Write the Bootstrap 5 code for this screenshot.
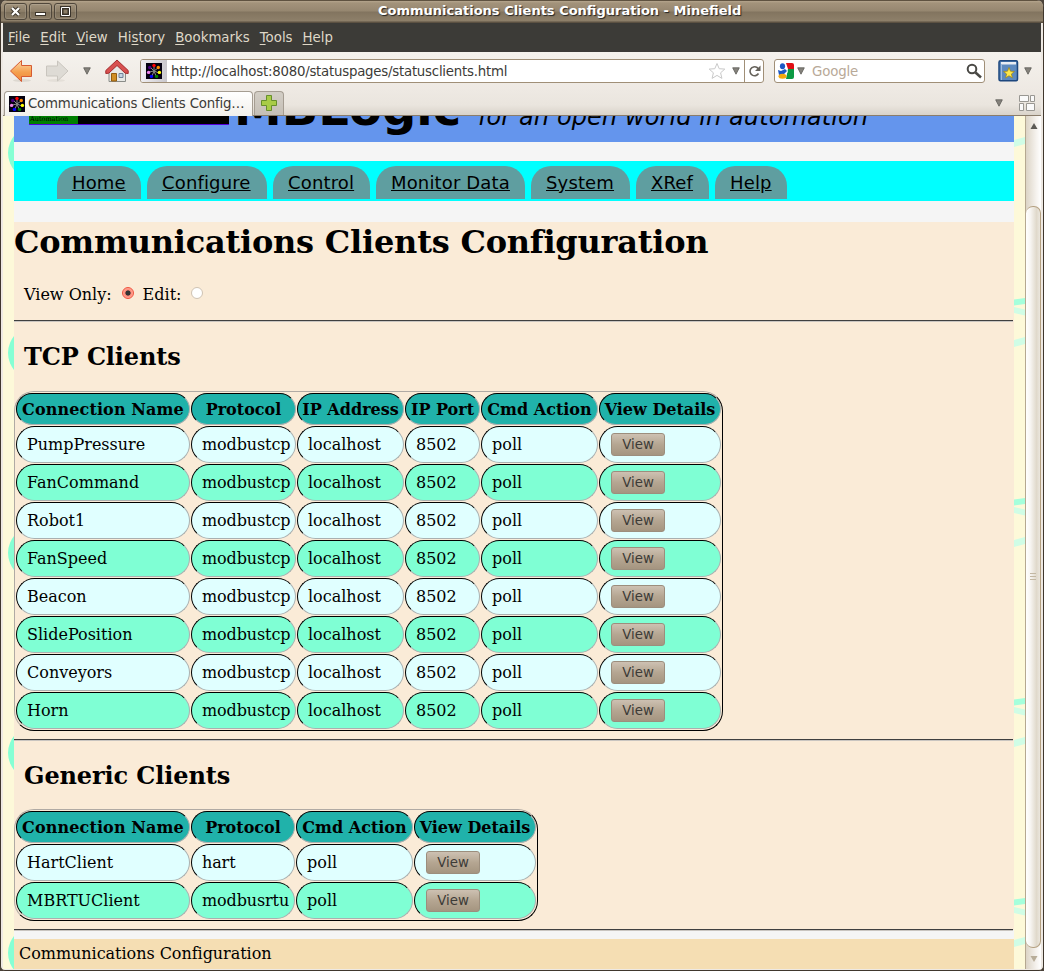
<!DOCTYPE html>
<html lang="en">
<head>
<meta charset="utf-8">
<title>Communications Clients Configuration</title>
<link href="https://cdn.jsdelivr.net/npm/bootstrap@5.3.0/dist/css/bootstrap.min.css" rel="stylesheet">
<style>
body{width:1044px;height:971px;overflow:hidden;background:#4b433a;font-family:"DejaVu Sans",sans-serif;color:#3c3b37;line-height:normal}
svg{display:block;flex:none}
.frame{width:1044px;height:971px;border-radius:7px 7px 5px 5px;background:#eee9e3;border:1px solid #40372d;border-top:0}
.titlebar{height:23px;padding-left:3px;background:linear-gradient(#5f5240 0,#5f5240 1px,#b5a58d 1px,#a3937b 3px,#968770 11px,#82745f 12px,#8e806a 21px,#5c5142 22px);border-radius:6px 6px 0 0}
.wbtn{width:23px;height:17px;margin-top:3px;margin-right:2px;border:1px solid #50473b;border-radius:3px;background:linear-gradient(#a3947d,#8b7d67 50%,#7b6e5a 51%,#8c7e68);box-shadow:inset 0 0 0 1px rgba(255,255,255,.12)}
.wtitle{font-size:13px;font-weight:bold;color:#fff;text-shadow:1px 1px 1px #222;line-height:21px;width:363px;margin-left:299px;white-space:nowrap}
.menus{height:29px;margin:0 2px;padding-left:5px;background:#3c3b37;color:#dfd8c8;font-size:13.33px;line-height:29px;gap:10px}
.menus u{text-underline-offset:2px}
.tools{height:38px;padding:0 0 0 7px;background:linear-gradient(#f5f2ed,#eee9e3);margin:0 2px}
.field{height:24px;border:1px solid #a08f77;border-radius:3px;background:#fff;font-size:13.33px;line-height:22px}
.favcell{width:26px;height:22px;background:linear-gradient(90deg,#f0eff2,#c9c7cc);border-radius:2px 0 0 2px}
.urltext{letter-spacing:-.235px;padding-top:2px;white-space:nowrap}
.tabstrip{height:26px;margin:0 2px;padding:1px 0 0 1px;background:linear-gradient(#eee9e3,#eae5de 60%,#d9d3ca);border-bottom:1px solid #8b7d6b}
.tabx{width:249px;height:25px;border:1px solid #a59d92;border-bottom:0;border-radius:4px 4px 0 0;background:linear-gradient(#fff,#f3f0eb);font-size:13.33px;letter-spacing:-.19px;line-height:22px;padding-left:4px;white-space:nowrap}
.tabnew{width:30px;height:24px;margin-left:1px;border:1px solid #a59d92;border-bottom:0;border-radius:4px 4px 0 0;background:linear-gradient(#d3cec6,#c5bfb6)}
.stage{height:853px;margin:0 2px 0 2px;background:#fdf9d9;overflow:hidden}
.pagecol{width:1000px;height:853px;background:#f5f5f5;color:#000;font-family:"DejaVu Serif",serif;font-size:16px;overflow:hidden}
.banner{height:80px;margin-top:-54px;background:#6495ed;padding:0 0 0 15px;font-family:"DejaVu Sans",sans-serif;white-space:nowrap}
.logo{width:200px;height:63px;margin-bottom:17px;background:#000;border-bottom:1px solid #50d}
.logo span{display:flex;align-items:flex-end;width:49px;height:62px;background:#008000;font:6.5px/8px "DejaVu Serif",serif;padding:0 0 1px 1px;overflow:hidden}
.brand{font-size:48px;font-weight:bold;line-height:56px;margin:0 0 6px 5px;width:244px}
.motto{font-size:24px;font-style:italic;line-height:28px;margin-bottom:11px;letter-spacing:.1px}
.navrow{height:40px;margin-top:19px;padding:5px 0 0 43px;background:#0ff;gap:6px;font-family:"DejaVu Sans",sans-serif;font-size:18px}
.navrow a{height:33px;border-radius:20px 20px 0 0;background:#5f9ea0;color:#000;padding-left:15px;letter-spacing:.15px;line-height:33px;white-space:nowrap}
.mainbox{height:708px;margin-top:21px;background:#faebd7}
.mainbox h1{font-size:32px;font-weight:bold;line-height:38px;height:63px;margin:0;padding-top:1px;letter-spacing:-.22px}
.mainbox h2{font-size:24px;font-weight:bold;line-height:28px;margin:0;padding-left:10px;letter-spacing:-.12px}
.rule{height:2px;background:linear-gradient(#3f3f3f 50%,#c9c5c0 50%);margin:0;border:0;opacity:1;width:999px}
.views{height:35px;padding-left:10px}
.radio-dot{width:12px;height:12px;border-radius:50%;background:#fff;border:1px solid #cfc3b3}
.radio-on{border-color:#f0523c;background:radial-gradient(circle,#333 0 2.2px,#ff8a78 3px,#ffb5a8 6px)}
.clients{table-layout:fixed;border-collapse:separate;border-spacing:1px;border:1px solid;border-color:#b0aaa4 #000 #000 #b0aaa4;border-radius:20px;white-space:nowrap}
.clients th,.clients td{border:1px solid;border-color:#000 #aab0b0 #aab0b0 #000;border-radius:20px}
.clients th{height:32px;background:#20b2aa;text-align:center;padding:0}
.clients th:first-child{letter-spacing:.12px}
.clients td{height:37px;background:#e0ffff;padding:0 0 0 10px}
.clients td:nth-child(2){letter-spacing:-.12px}
.clients tr:nth-child(even) td{background:#7fffd4}
.vbtn{display:flex;justify-content:center;width:54px;height:23px;margin-left:1px;border:1px solid #9c8e7d;border-radius:3px;background:linear-gradient(#cdc1b2,#b5a692 50%,#a59580);font:13.33px/21px "DejaVu Sans",sans-serif;color:#3c3b37;padding:0}
.foot{height:40px;margin-top:9px;background:#f5deb3;padding-left:5px;line-height:29px;letter-spacing:-.04px}
.scroll{width:16px;height:853px;border-left:1px solid #b5a890;background:linear-gradient(90deg,#dcd4c6,#f6f3ef 70%,#fff)}
.thumb{height:742px;margin:0;border:1px solid #b5a182;border-left:0;border-radius:7px;background:linear-gradient(90deg,#fff,#f8f6f3 30%,#e0d9cb 75%,#ebe6dd)}
.arrowbox{height:90px}
</style>
</head>
<body>
<svg width="0" height="0" class="d-none"><defs>
<symbol id="fav" viewBox="0 0 16 16"><rect width="16" height="16" fill="#040010"/><path d="M8 8V3M8 8l4-3M8 8l5 2M8 8l2 5M8 8l-2 5M8 8L3 9M8 8L4 4" stroke="#888" stroke-width="1"/><circle cx="8" cy="2.5" r="1.7" fill="#f00"/><circle cx="12.3" cy="4.5" r="1.7" fill="#ff8c00"/><circle cx="13.4" cy="9.4" r="1.7" fill="#ff0"/><circle cx="10.6" cy="13.4" r="1.7" fill="#008000"/><circle cx="5.4" cy="13.4" r="1.7" fill="#00f"/><circle cx="2.6" cy="9.4" r="1.7" fill="#ee82ee"/><circle cx="3.7" cy="4.5" r="1.7" fill="#4b0082"/></symbol>
<symbol id="down" viewBox="0 0 8 8"><path d="M.7.8h6.6L4 7.2z" fill="#85827c" stroke="#5c5a55" stroke-width=".8"/></symbol>
</defs></svg>
<div class="frame">
  <header class="titlebar d-flex">
    <div class="wbtn"><svg width="21" height="15"><path d="M7 4l7 7M14 4l-7 7" stroke="#3b342b" stroke-width="4"/><path d="M7 4l7 7M14 4l-7 7" stroke="#fff" stroke-width="2.2"/></svg></div>
    <div class="wbtn"><svg width="21" height="15"><path d="M5 8h11v4H5z" fill="#3b342b"/><path d="M6 9h9v2H6z" fill="#fff"/></svg></div>
    <div class="wbtn"><svg width="21" height="15"><path d="M5 2h11v11H5z" fill="#3b342b"/><path d="M6.500 3.500h8v8h-8z" fill="none" stroke="#fff"/><path d="M8.500 5.500h4v4h-4z" fill="#8b7d67"/></svg></div>
    <div class="wtitle">Communications Clients Configuration - Minefield</div>
  </header>
  <nav class="menus d-flex"><span><u>F</u>ile</span><span><u>E</u>dit</span><span><u>V</u>iew</span><span>Hi<u>s</u>tory</span><span><u>B</u>ookmarks</span><span><u>T</u>ools</span><span><u>H</u>elp</span></nav>
  <div class="tools d-flex align-items-center">
    <svg width="22" height="24" viewBox="0 0 22 24"><defs><linearGradient id="og" x2="0" y2="1"><stop stop-color="#fcd9a8"/><stop offset=".55" stop-color="#f5a04f"/><stop offset="1" stop-color="#f08636"/></linearGradient></defs><ellipse cx="12" cy="21.5" rx="9" ry="1.5" fill="#ddd8d0"/><path d="M.5 12L11.500 1.500V6.500H21.500V17.500H11.500V22.500z" fill="url(#og)" stroke="#d65a32"/></svg>
    <svg style="margin-left:14px" width="22" height="24" viewBox="0 0 22 24"><ellipse cx="10" cy="21.500" rx="9" ry="1.500" fill="#e4dfd8"/><path d="M22 12L11.500 2V7H.5V17H11.500V22z" fill="#dedbd5" stroke="#c9c5be"/></svg>
    <svg style="margin-left:15px" width="8" height="8"><use href="#down"/></svg>
    <svg style="margin-left:14px" width="24" height="24" viewBox="0 0 24 24"><path d="M4 12v10.500h16.500V12L12 4z" fill="#e7e8e5" stroke="#8a8c88"/><path d="M6.500 14.500h5V22h-5z" fill="#d08e24" stroke="#935c10"/><path d="M14 14.500h4v4h-4z" fill="#c6d4e2" stroke="#718299"/><path d="M12 1L.8 11.500v3l3-.3L12 6.500l8.200 7.700 3 .3v-3z" fill="#d8504f" stroke="#a32c2e"/></svg>
    <div class="field d-flex align-items-center" style="margin-left:11px;width:624px">
      <div class="favcell d-flex align-items-center justify-content-center"><svg width="16" height="16"><use href="#fav"/></svg></div>
      <div class="urltext flex-grow-1 ps-1">http://localhost:8080/statuspages/statusclients.html</div>
      <svg width="18" height="18" viewBox="0 0 18 18"><path d="M9 1.500l2.200 5.200 5.600.4-4.200 3.700 1.300 5.600L9 13.400l-4.900 3 1.300-5.600L1.200 7.100l5.600-.4z" fill="#fff" stroke="#c9c9c9"/></svg>
      <svg style="margin:0 4px 0 6px" width="8" height="8"><use href="#down"/></svg>
      <div style="border-left:1px solid #a08f77;height:22px;width:19px" class="d-flex align-items-center ps-1"><svg width="12" height="14" viewBox="0 0 12 14"><path d="M9.500 9.500A4.500 4.500 0 1 1 8 3.500l2 2" fill="none" stroke="#66625b" stroke-width="1.600"/><path d="M11.500 1.500V7H6z" fill="#66625b"/></svg></div>
    </div>
    <div class="field d-flex align-items-center" style="margin-left:10px;width:211px;color:#b8a998">
      <svg style="margin-left:3px" width="16" height="16" viewBox="0 0 16 16"><path d="M8 0h6q2 0 2 2v4H10z" fill="#e00f16"/><path d="M10 6h6v8q0 2-2 2H8z" fill="#0c9a44"/><path d="M7 5l3 4-4 3-3-3z" fill="#fff"/><path d="M0 7l3 1 4-2 2 2-3 3-5 1z" fill="#1d58c4"/><ellipse cx="4.500" cy="3.200" rx="2.600" ry="3" fill="#1d58c4"/><ellipse cx="4.500" cy="13.200" rx="4" ry="2.500" fill="#f5a90d"/></svg>
      <svg style="margin:0 7px 0 3px" width="8" height="8"><use href="#down"/></svg><span class="flex-grow-1" style="padding-top:2px;letter-spacing:-.15px">Google</span>
      <svg style="margin-right:2px" width="16" height="16" viewBox="0 0 16 16"><circle cx="6" cy="6" r="4.300" fill="none" stroke="#494844" stroke-width="2"/><path d="M9.500 9.500l5.500 5" stroke="#494844" stroke-width="2.500"/></svg>
    </div>
    <svg style="margin-left:13px" width="21" height="22" viewBox="0 0 21 22"><rect x="1" y=".8" width="18.500" height="20" rx="1.500" fill="#5d8abf" stroke="#1d477e" stroke-width="1.500"/><path d="M3 2h15v2.500H3z" fill="#e9edf3"/><path d="M3.500 5v15" stroke="#a0bbdc"/><path d="M11 7.500l1.500 3.700 3.900.3-3 2.500 1 3.800-3.400-2-3.400 2 1-3.800-3-2.500 3.900-.3z" fill="#fde84a" stroke="#a4850b" stroke-width=".7"/></svg>
    <svg style="margin-left:5px" width="8" height="8"><use href="#down"/></svg>
  </div>
  <div class="tabstrip d-flex">
    <div class="tabx d-flex align-items-center gap-1"><svg width="16" height="16"><use href="#fav"/></svg><span style="margin-left:-1px">Communications Clients Config…</span></div>
    <div class="tabnew"><svg width="28" height="22" viewBox="0 0 28 22"><path d="M11.500 3.500h5v5h5v5h-5v5h-5v-5h-5v-5h5z" fill="#a8cc47" stroke="#678f2c"/></svg></div>
    <svg style="margin:8px 0 0 711px" width="8" height="8"><use href="#down"/></svg>
    <svg style="margin:4px 0 0 16px" width="17" height="17" viewBox="0 0 17 17" fill="#fafafa" stroke="#999792"><path d="M.5.500h9v6h-9zM11.500.500h4v6h-4zM.5 8.500h4v7h-4zM7.500 8.500h8v7h-8z"/></svg>
  </div>
  <div class="stage d-flex">
    <svg width="11" height="853"><defs><pattern id="lp" width="11" height="200" patternUnits="userSpaceOnUse"><circle cx="32" cy="37" r="27" fill="#7fffd4" opacity=".95"/></pattern></defs><rect width="11" height="853" fill="url(#lp)"/></svg>
    <div class="pagecol">
      <div class="banner d-flex align-items-end">
        <div class="logo"><span>Automation</span></div>
        <div class="brand">MBLogic</div>
        <div class="motto">for an open world in automation</div>
      </div>
      <nav class="navrow d-flex">
        <a href="#" style="width:84px">Home</a><a href="#" style="width:120px">Configure</a><a href="#" style="width:97px">Control</a><a href="#" style="width:149px">Monitor Data</a><a href="#" style="width:99px">System</a><a href="#" style="width:73px">XRef</a><a href="#" style="width:72px">Help</a>
      </nav>
      <main class="mainbox">
        <h1>Communications Clients Configuration</h1>
        <div class="views d-flex"><span>View Only:</span><i class="radio-dot radio-on" style="margin:2px 9px 0 10px"></i><span>Edit:</span><i class="radio-dot" style="margin:2px 0 0 10px"></i></div>
        <hr class="rule">
        <h2 style="padding-top:21px;height:69px">TCP Clients</h2>
        <table class="clients" style="width:709px"><colgroup><col style="width:174px"><col style="width:105px"><col style="width:107px"><col style="width:75px"><col style="width:117px"><col style="width:122px"></colgroup>
          <thead><tr><th>Connection Name</th><th>Protocol</th><th>IP Address</th><th>IP Port</th><th>Cmd Action</th><th>View Details</th></tr></thead>
          <tbody>
          <tr><td>PumpPressure</td><td>modbustcp</td><td>localhost</td><td>8502</td><td>poll</td><td><button class="vbtn">View</button></td></tr>
          <tr><td>FanCommand</td><td>modbustcp</td><td>localhost</td><td>8502</td><td>poll</td><td><button class="vbtn">View</button></td></tr>
          <tr><td>Robot1</td><td>modbustcp</td><td>localhost</td><td>8502</td><td>poll</td><td><button class="vbtn">View</button></td></tr>
          <tr><td>FanSpeed</td><td>modbustcp</td><td>localhost</td><td>8502</td><td>poll</td><td><button class="vbtn">View</button></td></tr>
          <tr><td>Beacon</td><td>modbustcp</td><td>localhost</td><td>8502</td><td>poll</td><td><button class="vbtn">View</button></td></tr>
          <tr><td>SlidePosition</td><td>modbustcp</td><td>localhost</td><td>8502</td><td>poll</td><td><button class="vbtn">View</button></td></tr>
          <tr><td>Conveyors</td><td>modbustcp</td><td>localhost</td><td>8502</td><td>poll</td><td><button class="vbtn">View</button></td></tr>
          <tr><td>Horn</td><td>modbustcp</td><td>localhost</td><td>8502</td><td>poll</td><td><button class="vbtn">View</button></td></tr>
          </tbody>
        </table>
        <hr class="rule" style="margin-top:8px">
        <h2 style="padding-top:21px;height:68px">Generic Clients</h2>
        <table class="clients" style="width:524px"><colgroup><col style="width:174px"><col style="width:104px"><col style="width:117px"><col style="width:122px"></colgroup>
          <thead><tr><th>Connection Name</th><th>Protocol</th><th>Cmd Action</th><th>View Details</th></tr></thead>
          <tbody>
          <tr><td>HartClient</td><td>hart</td><td>poll</td><td><button class="vbtn">View</button></td></tr>
          <tr><td>MBRTUClient</td><td>modbusrtu</td><td>poll</td><td><button class="vbtn">View</button></td></tr>
          </tbody>
        </table>
        <hr class="rule" style="margin-top:8px">
      </main>
      <footer class="foot">Communications Configuration</footer>
    </div>
    <svg width="11" height="853"><defs><pattern id="rp" width="11" height="200" patternUnits="userSpaceOnUse"><path d="M0 24l11-3v7L0 31z" fill="#d0fde6"/><path d="M0 183.500l11-1.500v6L0 189.500z" fill="#a5ffdc"/><path d="M0 191l11 2.500v6L0 197z" fill="#d0fde6"/></pattern></defs><rect width="11" height="853" fill="url(#rp)"/></svg>
    <div class="scroll flex-shrink-0">
      <div class="arrowbox"><svg width="15" height="20"><path d="M4.500 13L8 7l3.500 6z" fill="#5c5a55"/></svg></div>
      <div class="thumb d-flex align-items-center justify-content-center"><svg width="6" height="8"><path d="M0 .5h6M0 3.500h6M0 6.500h6" stroke="#c3b8a3"/></svg></div>
      <svg width="15" height="20"><path d="M4.500 8L8 14l3.500-6z" fill="#b8ad99"/></svg>
    </div>
  </div>
</div>
<script src="https://cdn.jsdelivr.net/npm/bootstrap@5.3.0/dist/js/bootstrap.bundle.min.js"></script>
</body>
</html>
